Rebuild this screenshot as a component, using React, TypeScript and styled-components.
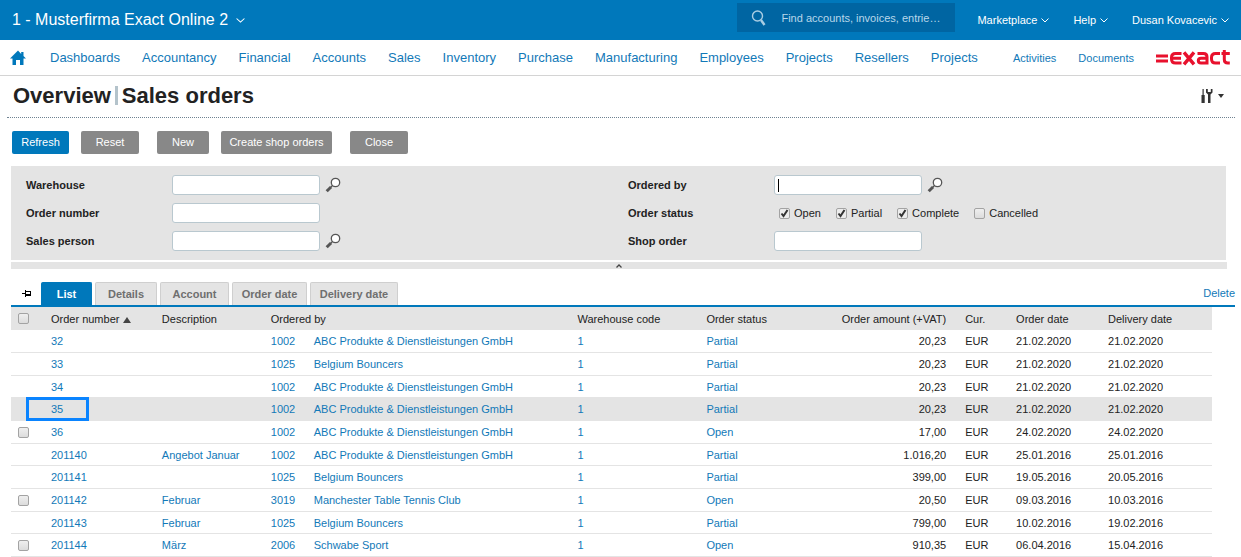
import React from "react";
import styled, { createGlobalStyle } from "styled-components";

const BLUE = "#0078bb";
const LINK = "#1279b8";
const GREY = "#e4e4e4";

const Global = createGlobalStyle`
  * { box-sizing: border-box; }
  body { margin: 0; background: #fff; }
  body, button, input, table { font-family: "Liberation Sans", Arial, sans-serif; font-size: 11px; color: #222; }
  a { color: ${LINK}; text-decoration: none; }
  svg { flex: none; }
`;

const TopBar = styled.header`
  display: flex;
  align-items: center;
  height: 40px;
  padding: 0 12px;
  background: ${BLUE};
`;

const MenuButton = styled.button<{ $large?: boolean }>`
  display: flex;
  align-items: center;
  gap: ${(p) => (p.$large ? 8 : 4)}px;
  padding: 0;
  border: 0;
  background: none;
  color: #fff;
  font-size: ${(p) => (p.$large ? 16 : 11)}px;
  white-space: nowrap;
`;

const SearchBox = styled.label`
  display: flex;
  align-items: center;
  gap: 14px;
  width: 218px;
  height: 29px;
  margin: 0 22px 5px auto;
  padding: 0 8px 0 14px;
  background: #0065a2;
`;

const SearchInput = styled.input`
  flex: 1;
  min-width: 0;
  padding: 0;
  border: 0;
  outline: 0;
  background: none;
  color: #fff;
  &::placeholder { color: #b8d7ea; opacity: 1; }
`;

const UserMenus = styled.div`
  display: flex;
  gap: 24px;
`;

const Nav = styled.nav`
  display: flex;
  align-items: center;
  height: 36px;
  padding: 0 11px 0 10px;
  border-bottom: 1px solid #d4d4d4;
`;

const NavMain = styled.div`
  display: flex;
  gap: 22px;
  margin: 0 auto 0 24px;
  font-size: 13px;
`;

const NavSide = styled.div`
  display: flex;
  gap: 22px;
  margin-right: 22px;
`;

const IconLink = styled.a`
  display: flex;
`;

const TitleBar = styled.div`
  display: flex;
  align-items: center;
  justify-content: space-between;
  height: 42px;
  margin: 0 6px 0 7px;
  padding: 0 11px 2px 6px;
  border-bottom: 1px dotted #6f8291;
`;

const Title = styled.h1`
  display: flex;
  align-items: center;
  gap: 4px;
  margin: 0;
  font-size: 22px;
  line-height: 26px;
`;

const TitleDivider = styled.span`
  width: 3px;
  height: 19px;
  background: #b4c3cb;
`;

const PlainButton = styled.button`
  display: flex;
  align-items: center;
  justify-content: center;
  gap: 5px;
  padding: 0;
  border: 0;
  background: none;
`;

const Actions = styled.div`
  display: flex;
  gap: 18px;
  padding: 13px 12px 12px;
`;

const ActionGroup = styled.div`
  display: flex;
  gap: 12px;
`;

const ActionButton = styled.button<{ $primary?: boolean; $width: number }>`
  width: ${(p) => p.$width}px;
  height: 23px;
  padding: 0 0 2px;
  border: 0;
  border-radius: 2px;
  background: ${(p) => (p.$primary ? BLUE : "#888")};
  color: #fff;
`;

const Filters = styled.form`
  display: grid;
  grid-template-columns: 1fr 1fr;
  column-gap: 4px;
  margin: 0 15px 2px 11px;
  padding: 5px 0 5px 15px;
  background: ${GREY};
`;

const FilterColumn = styled.div`
  display: grid;
  grid-auto-rows: 28px;
`;

const FilterRow = styled.div`
  display: flex;
  align-items: center;
`;

const FilterLabel = styled.label`
  width: 146px;
  font-weight: bold;
`;

const TextInput = styled.input`
  width: 148px;
  height: 20px;
  margin-right: 5px;
  padding: 0 4px;
  border: 1px solid #b9c8cf;
  border-radius: 3px;
  outline: 0;
  background: #fff;
  &:focus:placeholder-shown {
    caret-color: transparent;
    background: linear-gradient(#000, #000) 3px center / 1px 13px no-repeat, #fff;
  }
`;

const StatusGroup = styled.div`
  display: flex;
  gap: 15px;
  padding-left: 5px;
`;

const CheckLabel = styled.label`
  display: flex;
  align-items: center;
  gap: 4px;
`;

const Check = styled.input.attrs({ type: "checkbox" })`
  appearance: none;
  flex: none;
  display: block;
  width: 11px;
  height: 11px;
  margin: 0;
  border: 1px solid #a3a3a3;
  border-radius: 2px;
  background: linear-gradient(#efefef, #dcdcdc);
  &:checked {
    background: url("data:image/svg+xml,%3Csvg xmlns='http://www.w3.org/2000/svg' viewBox='0 0 9 9'%3E%3Cpath d='M1.5 4.5l2 2.5 4-6' fill='none' stroke='%23333' stroke-width='2'/%3E%3C/svg%3E") center / 9px 9px no-repeat, #ececec;
  }
`;

const Collapse = styled.button`
  display: flex;
  align-items: center;
  justify-content: center;
  width: calc(100% - 25px);
  height: 7px;
  margin: 0 14px 0 11px;
  padding: 0;
  border: 0;
  background: ${GREY};
`;

const TabBar = styled.div`
  display: flex;
  align-items: flex-end;
  height: 38px;
  margin: 0 6px 0 11px;
  border-bottom: 2px solid ${BLUE};
`;

const Pin = styled(PlainButton)`
  width: 30px;
  height: 23px;
`;

const Tabs = styled.div`
  display: flex;
  gap: 3px;
  margin-right: auto;
`;

const Tab = styled.button<{ $active?: boolean; $width: number }>`
  width: ${(p) => p.$width}px;
  height: 23px;
  padding: 0;
  border: 1px solid ${(p) => (p.$active ? BLUE : "#cfcfcf")};
  border-bottom: 0;
  border-radius: 2px 2px 0 0;
  background: ${(p) => (p.$active ? BLUE : GREY)};
  color: ${(p) => (p.$active ? "#fff" : "#6f6f6f")};
  font-weight: bold;
`;

const DeleteLink = styled.a`
  align-self: center;
  padding-top: 12px;
`;

const TableWrap = styled.div`
  margin: 0 29px 0 11px;
`;

const Table = styled.table`
  width: 100%;
  table-layout: fixed;
  border-collapse: separate;
  border-spacing: 0;
`;

const HeadRow = styled.tr`
  height: 23px;
  background: ${GREY};
`;

const Row = styled.tr<{ $selected?: boolean }>`
  height: 23px;
  background: ${(p) => (p.$selected ? GREY : "#fff")};
  &:nth-child(3n) { height: 22px; }
  td { border-bottom: 1px solid ${GREY}; }
`;

const Head = styled.th<{ $right?: boolean }>`
  padding: 0;
  font-weight: normal;
  text-align: ${(p) => (p.$right ? "right" : "left")};
  white-space: nowrap;
`;

const Cell = styled.td<{ $right?: boolean }>`
  position: relative;
  padding: 0;
  text-align: ${(p) => (p.$right ? "right" : "left")};
  white-space: nowrap;
`;

const CheckCell = styled(Cell)`
  padding-left: 7px;
`;

const CheckHead = styled(Head)`
  padding-left: 7px;
`;

const Highlight = styled.span`
  position: absolute;
  inset: -1px auto auto -25px;
  width: 63px;
  height: 24px;
  border: 3px solid #0a84ff;
`;

const Chevron = ({ size = 8 }: { size?: number }) => (
  <svg width={size} height="5" viewBox="0 0 8 5" preserveAspectRatio="none" fill="none" stroke="#fff" aria-hidden="true">
    <path d="M.5.5 4 4 7.5.5" />
  </svg>
);

const Magnifier = () => (
  <svg width="16" height="16" viewBox="0 0 16 16" fill="none" aria-hidden="true">
    <circle cx="10.500" cy="5.500" r="4.200" fill="#fff" stroke="#555" strokeWidth="1.300" />
    <path d="M7.500 8.500 5.500 10.500" stroke="#555" strokeWidth="1.200" />
    <path d="M6 10 1.700 14.300" stroke="#555" strokeWidth="3" />
  </svg>
);

const Logo = () => (
  <svg width="74" height="16" viewBox="0 0 74 16" fill="none" stroke="#e8112d" strokeWidth="3" aria-label="exact" role="img">
    <path d="M0 6h12M0 11h12" />
    <path d="M25.500 3.500h-6q-4 0-4 4v1.500q0 4 4 4h6M15.500 8.200h9.500" />
    <path d="M28 2.300 38 14.300M38 2.300 28 14.300" strokeWidth="3.400" />
    <path d="M41.500 3.500h6q3.500 0 3.500 3.500V13h-6q-2.700 0-2.700-2.400T45 8.200h6" />
    <path d="M64 3.500h-4.500q-4 0-4 4v1.500q0 4 4 4H64" />
    <path d="M68.300 0v9.500q0 3.500 3.500 3.500h2M65.500 3.500h8.300" />
  </svg>
);

type FieldProps = { id: string; label: string; lookup?: boolean; autoFocus?: boolean };

const Field = ({ id, label, lookup, autoFocus }: FieldProps) => (
  <FilterRow>
    <FilterLabel htmlFor={id}>{label}</FilterLabel>
    <TextInput id={id} type="text" placeholder=" " autoFocus={autoFocus} />
    {lookup && (
      <PlainButton type="button" aria-label={`Look up ${label}`}>
        <Magnifier />
      </PlainButton>
    )}
  </FilterRow>
);

const modules = ["Dashboards", "Accountancy", "Financial", "Accounts", "Sales", "Inventory", "Purchase", "Manufacturing", "Employees", "Projects", "Resellers", "Projects"];

const statuses: [string, boolean][] = [["Open", true], ["Partial", true], ["Complete", true], ["Cancelled", false]];

const tabs: [string, number][] = [["List", 51], ["Details", 62], ["Account", 69], ["Order date", 75], ["Delivery date", 88]];

const columns = [40, 111, 109, 43, 264, 129, 120, 120, 19, 51, 92, 104];

const ABC = "ABC Produkte & Dienstleistungen GmbH";
const BB = "Belgium Bouncers";

type Order = [string, string, string, string, string, string, string, string];
const orders: Order[] = [
  ["32", "", "1002", ABC, "Partial", "20,23", "21.02.2020", "21.02.2020"],
  ["33", "", "1025", BB, "Partial", "20,23", "21.02.2020", "21.02.2020"],
  ["34", "", "1002", ABC, "Partial", "20,23", "21.02.2020", "21.02.2020"],
  ["35", "", "1002", ABC, "Partial", "20,23", "21.02.2020", "21.02.2020"],
  ["36", "", "1002", ABC, "Open", "17,00", "24.02.2020", "24.02.2020"],
  ["201140", "Angebot Januar", "1002", ABC, "Partial", "1.016,20", "25.01.2016", "25.01.2016"],
  ["201141", "", "1025", BB, "Partial", "399,00", "19.05.2016", "20.05.2016"],
  ["201142", "Februar", "3019", "Manchester Table Tennis Club", "Open", "20,50", "09.03.2016", "10.03.2016"],
  ["201143", "Februar", "1025", BB, "Partial", "799,00", "10.02.2016", "19.02.2016"],
  ["201144", "März", "2006", "Schwabe Sport", "Open", "910,35", "06.04.2016", "15.04.2016"],
];

const SELECTED = "35";

export default function App() {
  return (
    <>
      <Global />
      <TopBar>
        <MenuButton $large>
          1 - Musterfirma Exact Online 2 <Chevron size={9} />
        </MenuButton>
        <SearchBox>
          <svg width="16" height="16" viewBox="0 0 16 16" fill="none" stroke="#a9cde3" aria-hidden="true">
            <circle cx="6.500" cy="6" r="5" strokeWidth="1.400" />
            <path d="m10 10 3.500 5" strokeWidth="2.400" />
          </svg>
          <SearchInput type="text" placeholder="Find accounts, invoices, entrie…" aria-label="Search" />
        </SearchBox>
        <UserMenus>
          {["Marketplace", "Help", "Dusan Kovacevic"].map((name) => (
            <MenuButton key={name}>
              {name} <Chevron />
            </MenuButton>
          ))}
        </UserMenus>
      </TopBar>

      <Nav>
        <IconLink href="#home" aria-label="Home">
          <svg width="16" height="16" viewBox="0 0 16 16" fill={BLUE} aria-hidden="true">
            <path d="M8 .5 0 8.500h2.500V15h3.500v-5h4v5h3.500V8.500H16L13.500 6V2h-2.300v2z" />
          </svg>
        </IconLink>
        <NavMain>
          {modules.map((name, i) => (
            <a key={i} href={`#${name.toLowerCase()}`}>{name}</a>
          ))}
        </NavMain>
        <NavSide>
          <a href="#activities">Activities</a>
          <a href="#documents">Documents</a>
        </NavSide>
        <Logo />
      </Nav>

      <main>
        <TitleBar>
          <Title>
            Overview <TitleDivider /> Sales orders
          </Title>
          <PlainButton aria-label="Customize">
            <svg width="12" height="16" viewBox="0 0 12 16" fill="#333" aria-hidden="true">
              <path d="M1.500 1h1.200v6h1v8H.5V7h1zM5 1v3.500L7 6.500V15h2.500V6.500l2-2V1h-1.700v3h-3V1z" />
            </svg>
            <svg width="6" height="4" viewBox="0 0 6 4" fill="#333" aria-hidden="true">
              <path d="M0 0h6L3 4z" />
            </svg>
          </PlainButton>
        </TitleBar>

        <Actions>
          <ActionGroup>
            <ActionButton $primary $width={57}>Refresh</ActionButton>
            <ActionButton $width={58}>Reset</ActionButton>
          </ActionGroup>
          <ActionGroup>
            <ActionButton $width={52}>New</ActionButton>
            <ActionButton $width={111}>Create shop orders</ActionButton>
          </ActionGroup>
          <ActionButton $width={58}>Close</ActionButton>
        </Actions>

        <Filters>
          <FilterColumn>
            <Field id="warehouse" label="Warehouse" lookup />
            <Field id="order-number" label="Order number" />
            <Field id="sales-person" label="Sales person" lookup />
          </FilterColumn>
          <FilterColumn>
            <Field id="ordered-by" label="Ordered by" lookup autoFocus />
            <FilterRow role="group" aria-labelledby="order-status">
              <FilterLabel as="span" id="order-status">Order status</FilterLabel>
              <StatusGroup>
                {statuses.map(([name, on]) => (
                  <CheckLabel key={name}>
                    <Check defaultChecked={on} /> {name}
                  </CheckLabel>
                ))}
              </StatusGroup>
            </FilterRow>
            <Field id="shop-order" label="Shop order" />
          </FilterColumn>
        </Filters>
        <Collapse aria-label="Collapse filters">
          <svg width="6" height="4" viewBox="0 0 6 4" fill="none" stroke="#444" strokeWidth="1.300" aria-hidden="true">
            <path d="M.5 3.500 3 1l2.500 2.500" />
          </svg>
        </Collapse>

        <TabBar>
          <Pin aria-label="Pin tab">
            <svg width="9" height="7" viewBox="0 0 9 7" fill="none" stroke="#000" aria-hidden="true">
              <path d="M0 3.500h3M3.500 0v7M3.500 1.500h5M8.500 1v5" />
              <path d="M3.500 5h5" strokeWidth="2" />
            </svg>
          </Pin>
          <Tabs role="tablist">
            {tabs.map(([name, width], i) => (
              <Tab key={name} role="tab" aria-selected={i === 0} $active={i === 0} $width={width}>
                {name}
              </Tab>
            ))}
          </Tabs>
          <DeleteLink href="#delete">Delete</DeleteLink>
        </TabBar>

        <TableWrap>
          <Table>
            <colgroup>
              {columns.map((w, i) => (
                <col key={i} style={{ width: `${(w / 1202) * 100}%` }} />
              ))}
            </colgroup>
            <thead>
              <HeadRow>
                <CheckHead><Check aria-label="Select all" /></CheckHead>
                <Head>
                  Order number{" "}
                  <svg width="8" height="6" viewBox="0 0 8 6" fill="#444" aria-hidden="true">
                    <path d="M0 6h8L4 0z" />
                  </svg>
                </Head>
                <Head>Description</Head>
                <Head colSpan={2}>Ordered by</Head>
                <Head>Warehouse code</Head>
                <Head>Order status</Head>
                <Head $right>Order amount (+VAT)</Head>
                <Head />
                <Head>Cur.</Head>
                <Head>Order date</Head>
                <Head>Delivery date</Head>
              </HeadRow>
            </thead>
            <tbody>
              {orders.map(([number, description, code, customer, status, amount, ordered, delivery]) => (
                <Row key={number} $selected={number === SELECTED}>
                  <CheckCell>
                    {status === "Open" && <Check aria-label={`Select order ${number}`} />}
                  </CheckCell>
                  <Cell>
                    {number === SELECTED && <Highlight />}
                    <a href={`#order-${number}`}>{number}</a>
                  </Cell>
                  <Cell>{description && <a href={`#order-${number}`}>{description}</a>}</Cell>
                  <Cell><a href={`#account-${code}`}>{code}</a></Cell>
                  <Cell><a href={`#account-${code}`}>{customer}</a></Cell>
                  <Cell><a href="#warehouse-1">1</a></Cell>
                  <Cell><a href={`#status-${number}`}>{status}</a></Cell>
                  <Cell $right>{amount}</Cell>
                  <Cell />
                  <Cell>EUR</Cell>
                  <Cell>{ordered}</Cell>
                  <Cell>{delivery}</Cell>
                </Row>
              ))}
            </tbody>
          </Table>
        </TableWrap>
      </main>
    </>
  );
}
